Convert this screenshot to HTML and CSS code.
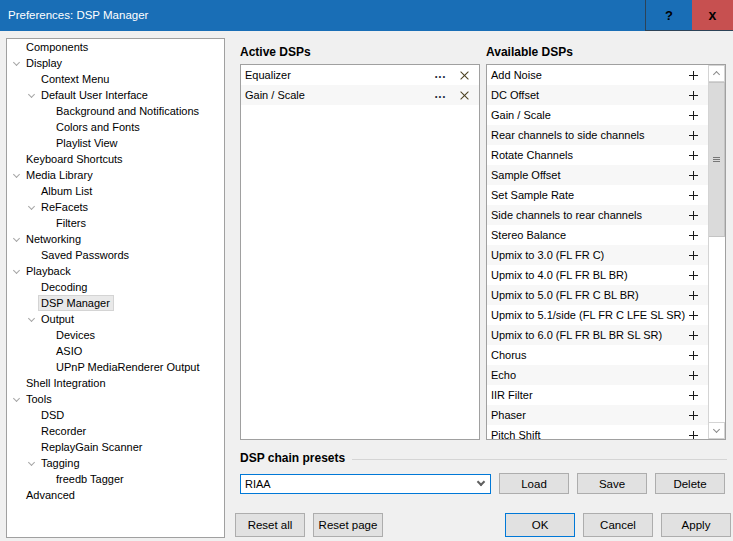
FILE: index.html
```html
<!DOCTYPE html>
<html lang="en">
<head>
    <meta charset="UTF-8">
    <title>Preferences: DSP Manager</title>
    <link rel="stylesheet" href="styles.css">
</head>
<body>
    <div class="titlebar">
        <div class="title">Preferences: DSP Manager</div>
        <div class="cap-btn help">?</div>
        <div class="cap-btn close">x</div>
    </div>

    <div class="window">
        <div class="tree">
            <div class="node l0"><span class="tog"></span><span class="label">Components</span></div>
            <div class="node l0 open"><span class="tog"></span><span class="label">Display</span></div>
            <div class="node l1"><span class="tog"></span><span class="label">Context Menu</span></div>
            <div class="node l1 open"><span class="tog"></span><span class="label">Default User Interface</span></div>
            <div class="node l2"><span class="tog"></span><span class="label">Background and Notifications</span></div>
            <div class="node l2"><span class="tog"></span><span class="label">Colors and Fonts</span></div>
            <div class="node l2"><span class="tog"></span><span class="label">Playlist View</span></div>
            <div class="node l0"><span class="tog"></span><span class="label">Keyboard Shortcuts</span></div>
            <div class="node l0 open"><span class="tog"></span><span class="label">Media Library</span></div>
            <div class="node l1"><span class="tog"></span><span class="label">Album List</span></div>
            <div class="node l1 open"><span class="tog"></span><span class="label">ReFacets</span></div>
            <div class="node l2"><span class="tog"></span><span class="label">Filters</span></div>
            <div class="node l0 open"><span class="tog"></span><span class="label">Networking</span></div>
            <div class="node l1"><span class="tog"></span><span class="label">Saved Passwords</span></div>
            <div class="node l0 open"><span class="tog"></span><span class="label">Playback</span></div>
            <div class="node l1"><span class="tog"></span><span class="label">Decoding</span></div>
            <div class="node l1 selected"><span class="tog"></span><span class="label">DSP Manager</span></div>
            <div class="node l1 open"><span class="tog"></span><span class="label">Output</span></div>
            <div class="node l2"><span class="tog"></span><span class="label">Devices</span></div>
            <div class="node l2"><span class="tog"></span><span class="label">ASIO</span></div>
            <div class="node l2"><span class="tog"></span><span class="label">UPnP MediaRenderer Output</span></div>
            <div class="node l0"><span class="tog"></span><span class="label">Shell Integration</span></div>
            <div class="node l0 open"><span class="tog"></span><span class="label">Tools</span></div>
            <div class="node l1"><span class="tog"></span><span class="label">DSD</span></div>
            <div class="node l1"><span class="tog"></span><span class="label">Recorder</span></div>
            <div class="node l1"><span class="tog"></span><span class="label">ReplayGain Scanner</span></div>
            <div class="node l1 open"><span class="tog"></span><span class="label">Tagging</span></div>
            <div class="node l2"><span class="tog"></span><span class="label">freedb Tagger</span></div>
            <div class="node l0"><span class="tog"></span><span class="label">Advanced</span></div>
        </div>

        <div class="pane">
            <div class="lists">
                <div class="section-title">Active DSPs</div>
                <div class="section-title">Available DSPs</div>

                <div class="listbox">
                    <div class="rows">
                        <div class="row"><span>Equalizer</span><span class="acts"><span class="dots">...</span><span class="x"></span></span></div>
                        <div class="row"><span>Gain / Scale</span><span class="acts"><span class="dots">...</span><span class="x"></span></span></div>
                    </div>
                </div>

                <div class="listbox">
                    <div class="rows" id="available"></div>
                    <div class="vscroll">
                        <div class="sb-btn up"></div>
                        <div class="sb-thumb"><span class="grip"></span></div>
                        <div class="sb-track"></div>
                        <div class="sb-btn down"></div>
                    </div>
                </div>
            </div>

            <div class="presets-head">
                <span>DSP chain presets</span>
                <span class="rule"></span>
            </div>

            <div class="presets-row">
                <div class="combo"><span>RIAA</span><span class="chev"></span></div>
                <button class="btn">Load</button>
                <button class="btn">Save</button>
                <button class="btn">Delete</button>
            </div>

            <div class="bottom-row">
                <button class="btn tall">Reset all</button>
                <button class="btn tall">Reset page</button>
                <span class="spacer"></span>
                <button class="btn tall default">OK</button>
                <button class="btn tall">Cancel</button>
                <button class="btn tall">Apply</button>
            </div>
        </div>
    </div>

    <script>
        const available = [
            "Add Noise", "DC Offset", "Gain / Scale", "Rear channels to side channels",
            "Rotate Channels", "Sample Offset", "Set Sample Rate", "Side channels to rear channels",
            "Stereo Balance", "Upmix to 3.0 (FL FR C)", "Upmix to 4.0 (FL FR BL BR)",
            "Upmix to 5.0 (FL FR C BL BR)", "Upmix to 5.1/side (FL FR C LFE SL SR)",
            "Upmix to 6.0 (FL FR BL BR SL SR)", "Chorus", "Echo", "IIR Filter", "Phaser", "Pitch Shift"
        ];

        const list = document.getElementById('available');
        available.forEach(name => {
            const row = document.createElement('div');
            row.className = 'row';
            row.innerHTML = `<span>${name}</span><span class="plus"></span>`;
            list.appendChild(row);
        });
    </script>
</body>
</html>
```

FILE: styles.css
```css
* {
    box-sizing: border-box;
}

body {
    margin: 0;
    width: 733px;
    height: 541px;
    overflow: hidden;
    background: #f0f0f0;
    font-family: "Liberation Sans", Arial, sans-serif;
    font-size: 11px;
    color: #000;
}

/* title bar */
.titlebar {
    height: 31px;
    display: flex;
    background: #196eb6;
}

.title {
    flex: 1;
    padding-left: 8px;
    line-height: 30px;
    font-size: 11.5px;
    color: #fff;
}

.cap-btn {
    width: 47px;
    display: flex;
    align-items: center;
    justify-content: center;
    font-weight: bold;
    font-size: 13px;
    border-bottom: 1px solid #2c4257;
}

.help {
    border-left: 1px solid #2c4257;
}

.close {
    width: 41px;
    background: #c75050;
    font-size: 14px;
}

.window {
    display: flex;
    padding: 7px 0 0 6px;
}

/* tree */
.tree {
    width: 219px;
    height: 500px;
    background: #fff;
    border: 1px solid #a0a0a0;
}

.node {
    height: 16px;
    display: flex;
    align-items: center;
    white-space: nowrap;
}

.node.l0 { padding-left: 4px; }
.node.l1 { padding-left: 19px; }
.node.l2 { padding-left: 34px; }

.tog {
    width: 15px;
    height: 16px;
    flex: none;
    position: relative;
}

.node.open .tog::after {
    content: "";
    position: absolute;
    left: 3px;
    top: 5px;
    width: 4px;
    height: 4px;
    border-right: 1px solid #a6a6a6;
    border-bottom: 1px solid #a6a6a6;
    transform: rotate(45deg);
}

.label {
    line-height: 14px;
    padding: 0 2px;
    margin-left: -3px;
    border: 1px solid transparent;
}

.node.selected .label {
    background: #e9e9e9;
    border-color: #d4d4d4;
    padding-right: 3px;
}

/* right pane */
.pane {
    width: 498px;
    margin-left: 10px;
    display: flex;
    flex-direction: column;
}

.lists {
    display: grid;
    grid-template-columns: 240px 240px;
    grid-template-rows: 26px 376px;
    column-gap: 6px;
    padding-left: 5px;
}

.section-title {
    font-weight: bold;
    font-size: 12px;
    padding-top: 7px;
    line-height: 15px;
}

.listbox {
    display: flex;
    background: #fff;
    border: 1px solid #a0a0a0;
    overflow: hidden;
}

.rows {
    flex: 1;
    overflow: hidden;
}

.row {
    height: 20px;
    display: flex;
    align-items: center;
    justify-content: space-between;
    padding: 0 10px 0 4px;
    white-space: nowrap;
}

.row:nth-child(even) {
    background: #f7f7f7;
}

.acts {
    display: flex;
    align-items: center;
    gap: 14px;
}

.dots {
    color: #1f2d3d;
    font-weight: bold;
    font-size: 12px;
    letter-spacing: 0.5px;
    line-height: 10px;
    margin-top: -2px;
}

.x, .plus {
    width: 9px;
    height: 9px;
    position: relative;
}

.x::before, .x::after {
    content: "";
    position: absolute;
    left: 4px;
    top: -1px;
    width: 1px;
    height: 11px;
    background: #4a4020;
    transform: rotate(45deg);
}

.x::after {
    transform: rotate(-45deg);
}

.plus::before, .plus::after {
    content: "";
    position: absolute;
    background: #1a1a1a;
}

.plus::before {
    left: 0;
    top: 4px;
    width: 9px;
    height: 1px;
}

.plus::after {
    left: 4px;
    top: 0;
    width: 1px;
    height: 9px;
}

/* scrollbar */
.vscroll {
    width: 17px;
    display: flex;
    flex-direction: column;
    border-left: 1px solid #d4d4d4;
}

.sb-btn {
    height: 17px;
    flex: none;
    background: #fff;
    border: 1px solid #d4d4d4;
    border-left: none;
    position: relative;
}

.sb-btn::after {
    content: "";
    position: absolute;
    left: 5px;
    width: 4px;
    height: 4px;
    border-right: 1px solid #8a8a8a;
    border-bottom: 1px solid #8a8a8a;
}

.sb-btn.up::after {
    top: 6px;
    transform: rotate(-135deg);
}

.sb-btn.down::after {
    top: 4px;
    transform: rotate(45deg);
}

.sb-thumb {
    height: 155px;
    flex: none;
    background: #dadada;
    border: 1px solid #c4c4c4;
    border-left: none;
    display: flex;
    align-items: center;
    justify-content: center;
}

.grip {
    width: 7px;
    height: 5px;
    border-top: 1px solid #777;
    border-bottom: 1px solid #777;
    position: relative;
}

.grip::after {
    content: "";
    position: absolute;
    left: 0;
    top: 1px;
    width: 7px;
    height: 1px;
    background: #777;
}

.sb-track {
    flex: 1;
}

/* presets */
.presets-head {
    display: flex;
    align-items: center;
    margin-top: 11px;
    padding-left: 5px;
    padding-right: 6px;
    line-height: 15px;
    font-weight: bold;
    font-size: 12px;
}

.rule {
    flex: 1;
    margin-left: 7px;
    margin-top: 2px;
    border-top: 1px solid #d5d5d5;
}

.presets-row {
    display: flex;
    gap: 8px;
    margin-top: 7px;
    padding-left: 5px;
}

.combo {
    width: 251px;
    height: 20px;
    margin-top: 1px;
    display: flex;
    align-items: center;
    justify-content: space-between;
    padding: 0 6px 0 4px;
    background: #fff;
    border: 1px solid #0078d7;
}

.chev {
    width: 6px;
    height: 6px;
    margin-top: -4px;
    border-right: 2px solid #606060;
    border-bottom: 2px solid #606060;
    transform: rotate(45deg);
}

.btn {
    width: 70px;
    height: 21px;
    padding: 0;
    font-family: inherit;
    font-size: 11.5px;
    color: #000;
    background: #e1e1e1;
    border: 1px solid #adadad;
}

.btn.tall {
    height: 24px;
}

.btn.default {
    border-color: #0078d7;
}

.bottom-row {
    display: flex;
    gap: 8px;
    margin-top: 19px;
    padding-right: 2px;
}

.spacer {
    flex: 1;
}
```
